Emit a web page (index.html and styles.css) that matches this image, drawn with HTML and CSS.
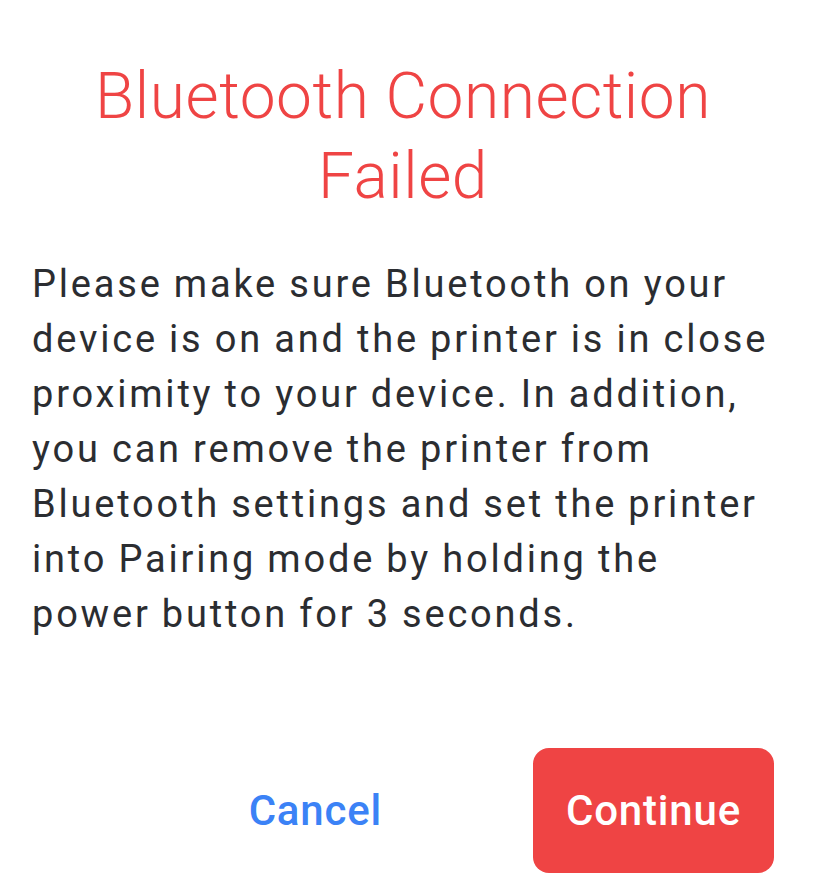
FILE: index.html
```html
<!DOCTYPE html>
<html>
<head>
<meta charset="utf-8">
<link rel="stylesheet" href="styles.css">
</head>
<body>
<div class="dialog">
  <h1 class="title">Bluetooth Connection Failed</h1>
  <p class="message">Please make sure Bluetooth on your device is on and the printer is in close proximity to your device. In addition, you can remove the printer from Bluetooth settings and set the printer into Pairing mode by holding the power button for 3 seconds.</p>
  <div class="actions">
    <button class="btn btn-text">Cancel</button>
    <button class="btn btn-primary">Continue</button>
  </div>
</div>
</body>
</html>
```
FILE: styles.css
```css
html, body {
  margin: 0;
  padding: 0;
  background: #ffffff;
}
body {
  font-family: Roboto, "Liberation Sans", sans-serif;
  width: 820px;
  height: 885px;
  overflow: hidden;
}
.dialog {
  padding: 57px 46px 0 32px;
  display: flex;
  flex-direction: column;
}
.title {
  margin: 0;
  font-weight: 300;
  font-size: 64px;
  line-height: 80px;
  color: #ef4444;
  text-align: center;
  letter-spacing: 0.55px;
}
.message {
  margin: 40px -6px 0 0;
  font-size: 38px;
  line-height: 55px;
  color: #2b2d31;
  letter-spacing: 2.8px;
  word-spacing: -1px;
}
.actions {
  margin-top: 106px;
  display: flex;
  justify-content: flex-end;
  align-items: center;
  gap: 151px;
}
.btn {
  font-family: Roboto, "Liberation Sans", sans-serif;
  font-size: 42px;
  font-weight: 500;
  letter-spacing: 0.8px;
  border: none;
  cursor: pointer;
}
.btn-text {
  background: transparent;
  color: #3b82f6;
  padding: 0;
}
.btn-primary {
  background: #ef4444;
  color: #ffffff;
  width: 241px;
  height: 125px;
  border-radius: 16px;
  padding: 0;
}
```
